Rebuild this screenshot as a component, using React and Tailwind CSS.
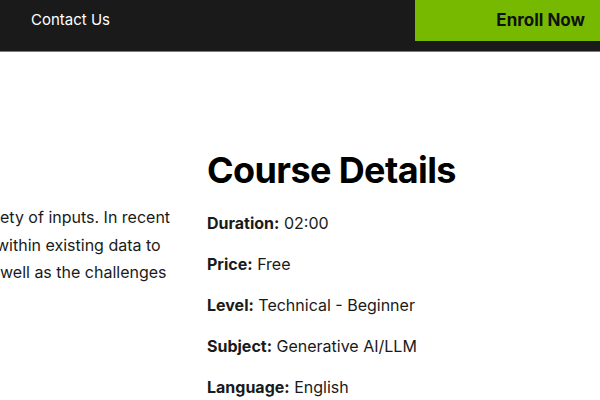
import React from "react";

const details = [
  ["Duration:", "02:00"],
  ["Price:", "Free"],
  ["Level:", "Technical - Beginner"],
  ["Subject:", "Generative AI/LLM"],
  ["Language:", "English"],
];

const App = () => {
  return (
    <div className="w-[600px] h-[400px] overflow-hidden bg-white text-black" style={{ fontFamily: "Inter, 'Noto Sans', sans-serif" }}>
      <header className="h-[52px] bg-[#1a1a1a] border-b border-[#7a7a7a] flex items-start justify-between">
        <a className="h-[41px] flex items-center pl-[31px] text-[15px] text-white">Contact Us</a>
        <button className="h-[41px] w-[185px] bg-[#76b900] flex items-center justify-end pr-[15px] text-[17px] font-bold text-[#111]">
          Enroll Now
        </button>
      </header>

      <main className="flex">
        <div className="w-[207px] shrink-0 overflow-hidden pt-[152px]">
          <div className="text-[16px] leading-[27.5px] text-[#1a1a1a] whitespace-nowrap">
            <div>ety of inputs. In recent</div>
            <div className="-ml-[4px]">within existing data to</div>
            <div>well as the challenges</div>
          </div>
        </div>

        <div className="pt-[94px]">
          <h2 className="text-[36px] font-bold leading-[48px] tracking-[-0.6px]">Course Details</h2>
          <ul className="mt-[17px] text-[16px] leading-[24px] text-[#1a1a1a] flex flex-col gap-[17px]">
            {details.map(([label, value]) => (
              <li key={label}>
                <span className="font-bold">{label}</span> {value}
              </li>
            ))}
          </ul>
        </div>
      </main>
    </div>
  );
};

export default App;
